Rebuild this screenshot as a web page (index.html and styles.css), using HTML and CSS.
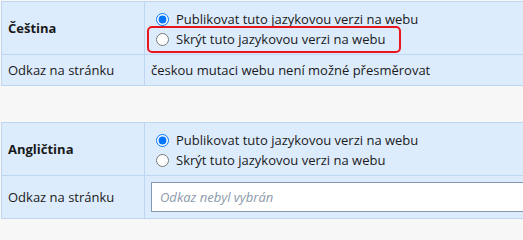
FILE: index.html
```html
<!DOCTYPE html>
<html lang="cs">
<head>
<meta charset="utf-8">
<title>Jazykové verze</title>
<link rel="stylesheet" href="styles.css">
</head>
<body>
<div class="page">
  <table class="lang">
    <tr class="row-main">
      <th class="label-cell">Čeština</th>
      <td class="value-cell">
        <label class="opt"><input type="radio" name="cs" checked><span>Publikovat tuto jazykovou verzi na webu</span></label>
        <label class="opt highlight"><input type="radio" name="cs"><span>Skrýt tuto jazykovou verzi na webu</span></label>
      </td>
    </tr>
    <tr class="row-link">
      <td class="label-cell plain">Odkaz na stránku</td>
      <td class="value-cell">českou mutaci webu není možné přesměrovat</td>
    </tr>
  </table>

  <table class="lang">
    <tr class="row-main">
      <th class="label-cell">Angličtina</th>
      <td class="value-cell">
        <label class="opt"><input type="radio" name="en" checked><span>Publikovat tuto jazykovou verzi na webu</span></label>
        <label class="opt"><input type="radio" name="en"><span>Skrýt tuto jazykovou verzi na webu</span></label>
      </td>
    </tr>
    <tr class="row-input">
      <td class="label-cell plain">Odkaz na stránku</td>
      <td class="value-cell"><input class="link-input" type="text" placeholder="Odkaz nebyl vybrán"></td>
    </tr>
  </table>
</div>
</body>
</html>
```
FILE: styles.css
```css
html, body {
  margin: 0;
  padding: 0;
  background: #f7f7f7;
  overflow: hidden;
}
body {
  font-family: "Open Sans", "Noto Sans", sans-serif;
  font-size: 13px;
  color: #1a1a1a;
}
.page {
  padding: 1px 0 0 1px;
  display: flex;
  flex-direction: column;
  gap: 36px;
}
.lang {
  border-collapse: collapse;
  width: 560px;
  background: #ddecfd;
}
.lang th, .lang td {
  border: 1px solid #bed6ef;
  padding: 0 6px;
  text-align: left;
  vertical-align: middle;
}
.label-cell {
  width: 130px;
  font-weight: 700;
}
.label-cell.plain {
  font-weight: 400;
}
.row-main {
  height: 53px;
}
.row-main .value-cell {
  padding-top: 2px;
}
.row-link {
  height: 31px;
}
.row-input .value-cell {
  padding: 6px;
}
.row-input {
  height: 43px;
}
.opt {
  position: relative;
  display: flex;
  align-items: center;
  height: 20px;
  width: max-content;
}
.opt input {
  width: 13px;
  height: 13px;
  margin: 0 7px 0 5px;
}
.highlight::after {
  content: "";
  position: absolute;
  left: -4px;
  right: -16px;
  top: -3px;
  bottom: -4px;
  border: 2px solid #e8161c;
  border-radius: 5px;
}
.link-input {
  display: block;
  box-sizing: border-box;
  width: 100%;
  height: 30px;
  border: 1px solid #8399ad;
  background: #fff;
  padding: 0 8px;
  font-family: "Open Sans", "Noto Sans", sans-serif;
  font-size: 13px;
}
.link-input::placeholder {
  font-style: italic;
  color: #8c9aab;
}
```
